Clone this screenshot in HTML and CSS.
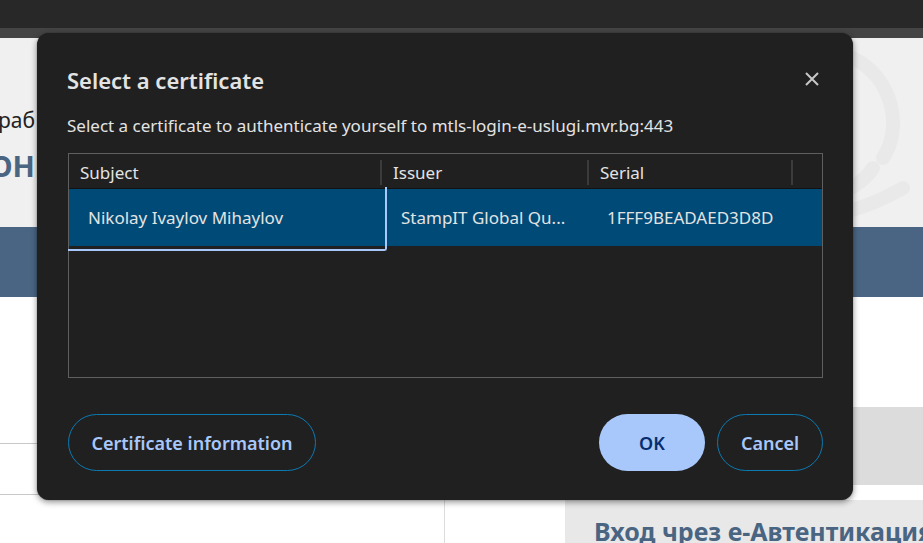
FILE: index.html
```html
<!DOCTYPE html>
<html>
<head>
<meta charset="utf-8">
<link rel="stylesheet" href="styles.css">
</head>
<body>
<div class="topbar"></div>
<div class="strip"></div>
<div class="page">
  <div class="hero">
    <div class="hero-text">
      <div class="hero-line">раб</div>
      <div class="hero-big">ОНІ</div>
    </div>
    <div class="hero-art">
      <svg width="220" height="189" viewBox="0 0 220 189">
        <g fill="none" stroke="#e9e9e9" stroke-width="14" stroke-linecap="round">
          <path d="M60 30 C20 60 30 120 70 150 C100 170 150 160 170 130"/>
          <path d="M150 20 C190 40 200 90 180 120"/>
          <path d="M40 170 C80 185 140 185 200 150"/>
          <path d="M100 60 C130 70 140 100 120 120"/>
        </g>
      </svg>
    </div>
  </div>
  <div class="band"></div>
  <div class="content">
    <div class="col-left">
      <div class="row-line first"></div>
      <div class="row-line"></div>
      <div class="col-rest"></div>
    </div>
    <div class="col-right">
      <div class="box-gray"></div>
      <div class="box-light"><h2 class="box-title">Вход чрез е-Автентикация</h2></div>
    </div>
  </div>
</div>

<div class="dialog">
  <div class="dlg-head">
    <h1 class="dlg-title">Select a certificate</h1>
    <button class="close" aria-label="Close">
      <svg width="16" height="16" viewBox="0 0 16 16"><path d="M2 2 L14 14 M14 2 L2 14" stroke="#c7c7c7" stroke-width="2"/></svg>
    </button>
  </div>
  <p class="dlg-sub">Select a certificate to authenticate yourself to mtls-login-e-uslugi.mvr.bg:443</p>
  <div class="table">
    <div class="thead">
      <div class="th c1">Subject</div>
      <div class="th c2">Issuer</div>
      <div class="th c3">Serial</div>
      <div class="th c4"></div>
    </div>
    <div class="trow">
      <div class="td c1 focus">Nikolay Ivaylov Mihaylov</div>
      <div class="td c2">StampIT Global Qu...</div>
      <div class="td c3">1FFF9BEADAED3D8D</div>
    </div>
  </div>
  <div class="dlg-actions">
    <button class="btn outline info">Certificate information</button>
    <div class="spacer"></div>
    <button class="btn primary">OK</button>
    <button class="btn outline cancel">Cancel</button>
  </div>
</div>
</body>
</html>
```

FILE: styles.css
```css
* { box-sizing: border-box; }
html, body { margin: 0; padding: 0; }
body {
  width: 923px;
  height: 543px;
  overflow: hidden;
  position: relative;
  font-family: "Noto Sans", "Open Sans", sans-serif;
  background: #fff;
}
.topbar { height: 28px; background: #282828; }
.strip { height: 10px; background: #444444; }
.page { background: #fff; }
.hero {
  height: 189px;
  background: #f0f0f0;
  display: flex;
  justify-content: space-between;
  overflow: hidden;
}
.hero-text { padding-top: 68px; }
.hero-line { font-size: 21px; color: #222; line-height: 28px; margin-left: -2px; }
.hero-big { font-size: 29px; font-weight: 700; color: #4a6582; line-height: 36px; margin-top: 14px; margin-left: -10px; }
.hero-art { width: 220px; }
.band { height: 70px; background: #4a6583; }
.content { display: flex; height: 246px; }
.col-left { width: 445px; flex-shrink: 0; display: flex; flex-direction: column; }
.row-line { height: 51px; border-bottom: 1px solid #c8c8c8; }
.row-line.first { height: 147px; }
.col-rest { flex: 1; border-right: 1px solid #dcdcdc; }
.col-right { flex: 1; min-width: 0; overflow: hidden; padding-left: 120px; padding-top: 110px; display: flex; flex-direction: column; }
.box-gray { height: 78px; background: #dcdcdc; }
.box-light { margin-top: 15px; flex: 1; background: #e8e8e8; padding: 16px 0 0 29px; overflow: hidden; }
.box-title { margin: 0; font-size: 25px; font-weight: 700; color: #4a6582; white-space: nowrap; line-height: 30px; }

.dialog {
  position: absolute;
  left: 37px;
  top: 33px;
  width: 816px;
  height: 467px;
  background: #202020;
  border-radius: 12px;
  box-shadow: 0 2px 6px rgba(0,0,0,0.45), 0 0 1px rgba(0,0,0,0.6);
  padding: 0 30px 0 31px;
  color: #e3e3e3;
}
.dlg-head { display: flex; justify-content: space-between; align-items: center; padding-top: 32px; }
.dlg-title { margin: 0 0 0 -1px; font-size: 22px; font-weight: 600; line-height: 30px; color: #e3e3e3; }
.close { background: none; border: 0; padding: 0; margin-right: -1px; margin-top: -3px; width: 24px; height: 24px; display: flex; align-items: center; justify-content: center; }
.dlg-sub { margin: 20px 0 0 -1px; font-size: 17px; line-height: 22px; color: #e3e3e3; white-space: nowrap; }
.table {
  margin-top: 16px;
  width: 755px;
  height: 225px;
  border: 1px solid #5f5f5f;
}
.thead {
  display: flex;
  height: 35px;
  border-bottom: 1px solid #121212;
  align-items: flex-end;
  padding-bottom: 3px;
}
.th { font-size: 17px; color: #e3e3e3; padding-left: 11px; height: 25px; line-height: 26px; border-right: 2px solid #3b3b3b; }
.c1 { width: 313px; }
.c2 { width: 207px; }
.c3 { width: 204px; }
.c4 { flex: 1; border-right: 0; }
.trow { display: flex; height: 57px; background: #004a77; }
.td { font-size: 17px; color: #e3e3e3; display: flex; align-items: center; }
.td.c1 { padding-left: 19px; width: 318px; }
.td.c2 { padding-left: 14px; width: 207px; }
.td.c3 { padding-left: 13px; }
.focus {
  position: relative;
}
.focus::after {
  content: "";
  position: absolute;
  left: -1px;
  right: 0;
  top: -2px;
  bottom: -5px;
  border: 2px solid #a8c7fa;
  border-top: 0;
  border-left: 0;
  border-radius: 0 0 3px 0;
}
.dlg-actions { display: flex; align-items: center; margin-top: 36px; gap: 12px; }
.spacer { flex: 1; }
.btn {
  height: 57px;
  border-radius: 29px;
  font-family: "Noto Sans", "Open Sans", sans-serif;
  font-size: 18px;
  font-weight: 600;
  padding: 0;
  cursor: pointer;
}
.btn.outline { background: transparent; border: 1.5px solid #0c79b0; color: #a8c7fa; }
.btn.info { width: 248px; }
.btn.primary { background: #a8c7fa; border: 0; color: #062e6f; width: 106px; }
.btn.cancel { width: 106px; }
```
